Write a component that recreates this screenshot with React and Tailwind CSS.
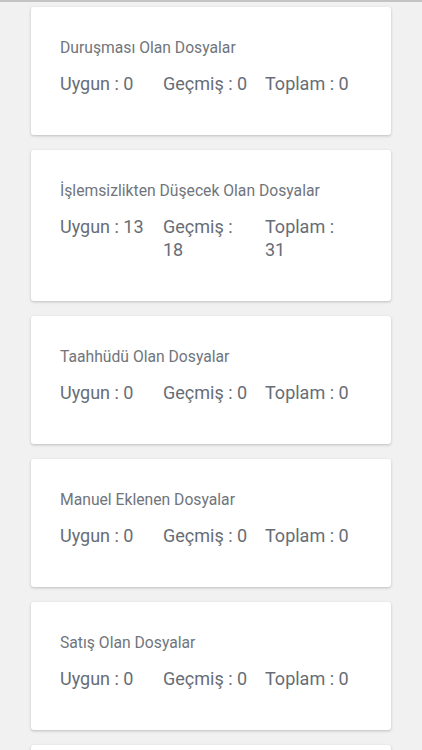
import React from "react";

const files = [
  { title: "Duruşması Olan Dosyalar", uygun: 0, gecmis: 0, toplam: 0 },
  { title: "İşlemsizlikten Düşecek Olan Dosyalar", uygun: 13, gecmis: 18, toplam: 31 },
  { title: "Taahhüdü Olan Dosyalar", uygun: 0, gecmis: 0, toplam: 0 },
  { title: "Manuel Eklenen Dosyalar", uygun: 0, gecmis: 0, toplam: 0 },
  { title: "Satış Olan Dosyalar", uygun: 0, gecmis: 0, toplam: 0 },
];

const FileCard = ({ item }) => {
  return (
    <div className="mx-[31px] bg-white rounded-[3px] shadow-[0_1px_3px_rgba(0,0,0,0.22)] pl-[29px] pr-[24px] pt-[30px] pb-[40px]">
      {/* Title */}
      <p className="text-[15.7px] leading-[22px] text-[#70757c]">{item.title}</p>

      {/* Counts */}
      <div className="grid grid-cols-[103px_102px_1fr] mt-[13px] text-[18px] leading-[23px] text-[#676d76]">
        <span className="pr-[12px]">Uygun : {item.uygun}</span>
        <span className="pr-[12px]">Geçmiş : {item.gecmis}</span>
        <span className="pr-[12px]">Toplam : {item.toplam}</span>
      </div>
    </div>
  );
};

export default function App() {
  return (
    <div
      className="h-[750px] overflow-hidden bg-[#f1f1f1] border-t-2 border-[#c4c4c4]"
      style={{ fontFamily: "Roboto, 'Noto Sans', sans-serif" }}
    >
      <div className="flex flex-col gap-[15px] pt-[5px]">
        {files.map((item) => (
          <FileCard key={item.title} item={item} />
        ))}
        {/* next card, only its top edge is visible */}
        <div className="mx-[31px] h-[127px] bg-white rounded-[3px] shadow-[0_1px_3px_rgba(0,0,0,0.22)]" />
      </div>
    </div>
  );
}
